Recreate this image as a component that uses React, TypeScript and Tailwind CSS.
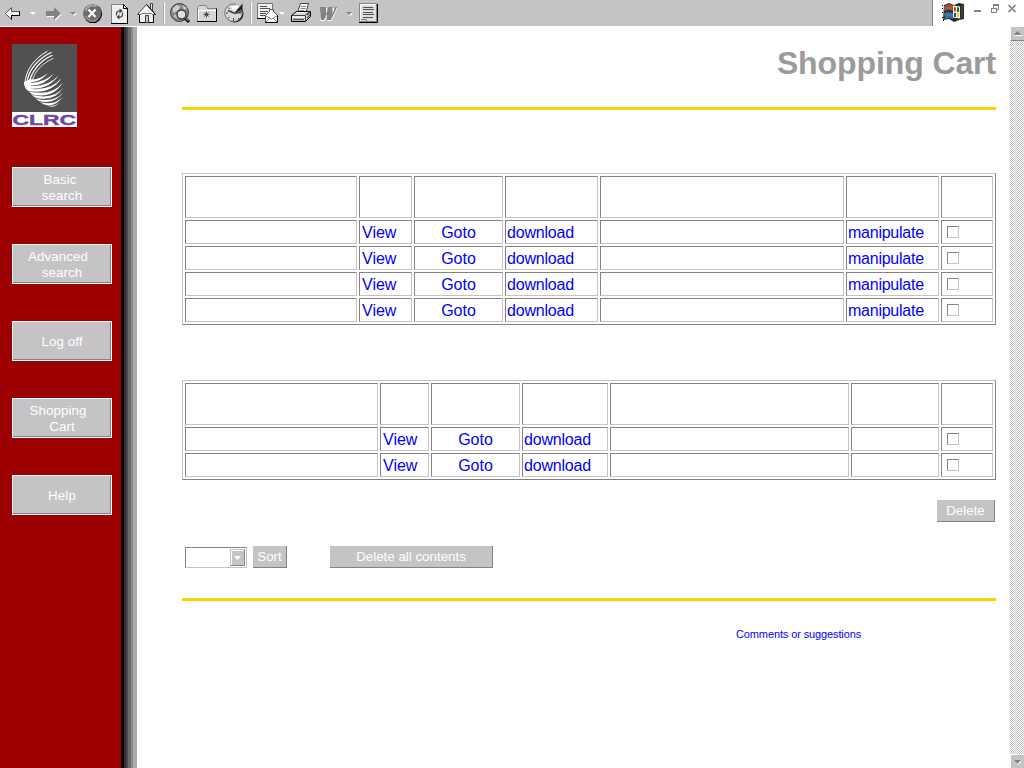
import React from "react";

type SlotProps = { x: number; w: number; children?: React.ReactNode };

/* One toolbar slot; its drawing uses toolbar coordinates. */
function Slot({ x, w, children }: SlotProps) {
  return (
    <svg width={w} height={26} viewBox={`${x} 0 ${w} 26`} className="block shrink-0" fill="none">
      {children}
    </svg>
  );
}

function Caret({ x, light }: { x: number; light?: boolean }) {
  return light ? (
    <path d={`M${x} 12h6l-3 3z`} fill="#fff" />
  ) : (
    <>
      <path d={`M${x + 1} 13h6l-3 3z`} fill="#fff" />
      <path d={`M${x} 12h6l-3 3z`} fill="#848284" />
    </>
  );
}

function Separator({ x }: { x: number }) {
  return (
    <g shapeRendering="crispEdges">
      <path d={`M${x + 0.5} 2v22`} stroke="#adaaad" />
      <path d={`M${x + 1.5} 2v22`} stroke="#fff" />
    </g>
  );
}

function Toolbar() {
  return (
    <div className="flex h-[26px] w-[933px] border-r border-[#848284] bg-[#c6c3c6]">
      <Slot x={0} w={26}>
        <path d="M11.5 7.500v4h8v4h-8v4l-6-6z" fill="#f7f7f7" stroke="#525152" />
        <path d="M11.500 19.500v-4h8v-4" stroke="#000" />
      </Slot>
      <Slot x={26} w={14}>
        <Caret x={30} light />
      </Slot>
      <Slot x={40} w={26}>
        <path d="M47 12h8V8l7 6-7 7v-4h-8z" fill="#fff" />
        <path d="M46 11h8V7l7 6.500-7 6.500V16h-8z" fill="#848284" />
      </Slot>
      <Slot x={66} w={15}>
        <Caret x={70} />
      </Slot>
      <Slot x={81} w={26}>
        <circle cx="92.800" cy="13.800" r="9.300" fill="#000" />
        <circle cx="92.200" cy="13.200" r="9" fill="#6b6d6b" />
        <path d="M85.500 11a7.500 7.500 0 0 1 11-4.500" stroke="#a5a6a5" strokeWidth="2" />
        <path d="M85.500 16a7.500 7.500 0 0 0 12 3" stroke="#8c8e8c" strokeWidth="2" />
        <path d="M88.500 9.500l7 7.500M95.500 9.500l-7 7.500" stroke="#fff" strokeWidth="2.200" />
      </Slot>
      <Slot x={107} w={26}>
        <path d="M111.500 4.500h12l4 4v15h-16z" fill="#efefef" stroke="#848284" />
        <path d="M111 23.500h17M127.500 23.500v-15h-4v-4l4 4" stroke="#000" />
        <path d="M116.500 15.500v-2q0-2.500 2.500-2.500h1" stroke="#424142" strokeWidth="1.200" />
        <path d="M119.500 8.500v5l3-2.500z" fill="#424142" />
        <path d="M122.500 12.500v2q0 2.500-2.500 2.500h-1" stroke="#424142" strokeWidth="1.200" />
        <path d="M119.500 14.500v5l-3-2.500z" fill="#424142" />
      </Slot>
      <Slot x={133} w={28}>
        <path d="M150.500 3.500h2v9h-2z" fill="#e7e7e7" stroke="#424142" />
        <path d="M139.500 13.500h14v9h-14z" fill="#efefef" stroke="#000" />
        <path d="M137.500 14.500l9-10 9 10h-3l-6-6-6 6z" fill="#fff" stroke="#424142" />
        <path d="M140 13.500l6.500-6 6 6z" fill="#efefef" />
        <path d="M145.500 15.500h3v7h-3z" fill="#c6c3c6" stroke="#424142" />
        <path d="M155.500 14.500l-9-10" stroke="#000" />
      </Slot>
      <Slot x={161} w={6}>
        <Separator x={163} />
      </Slot>
      <Slot x={167} w={26}>
        <circle cx="179.500" cy="12.500" r="9" fill="#848684" stroke="#424142" />
        <path d="M172.500 9l4-4 4 1-2 4-5 3zM182 5l5 3-3 2zM173 16l4-2 1 5z" fill="#ceced0" />
        <circle cx="181.500" cy="14.500" r="4.500" fill="#dedfde" stroke="#424142" strokeWidth="1.500" />
        <path d="M179.500 14a3 3 0 0 1 2-2" stroke="#fff" />
        <path d="M185 18l4 4" stroke="#000" strokeWidth="3" />
        <path d="M185 17.500l3.500 3.500" stroke="#d6d7d6" />
      </Slot>
      <Slot x={193} w={28}>
        <path d="M197.500 21.500v-14l1.500-2h7l1.500 3h9v13z" fill="#d6d7d6" stroke="#848284" />
        <path d="M198 10.500h18M198.500 10v11" stroke="#fff" />
        <path d="M197 21.500h19.500v-13" stroke="#000" />
        <path
          d="M206.500 11.500v6M203.500 14.500h6M204.500 12.500l4 4M208.500 12.500l-4 4"
          stroke="#424142"
          strokeWidth=".9"
        />
      </Slot>
      <Slot x={221} w={27}>
        <circle cx="234.500" cy="13.500" r="9" fill="#000" />
        <circle cx="233.500" cy="12.800" r="8.800" fill="#d6d7d6" stroke="#737573" />
        <path
          d="M233.500 5.500v2M233.500 18v3M226 13h2M239 13h2M228 7.500l1.500 1.500M228 18.500l1.500-1.500M238 18l1.500 1.500"
          stroke="#424142"
        />
        <path d="M234 12.500l-3-6 6-2 3 2z" fill="#f7f7f7" />
        <path d="M234 13.500l8.500-10v6z" fill="#212021" />
        <path d="M234 13l-6-2.500M234 13.500l8-2" stroke="#424142" strokeWidth="1.500" />
      </Slot>
      <Slot x={248} w={6}>
        <Separator x={250} />
      </Slot>
      <Slot x={254} w={33}>
        <path d="M257.500 3.500h15v15h-15z" fill="#efefef" stroke="#737573" />
        <path d="M260 6.500h7M260 8.500h10M260 11.500h8M260 13.500h6M260 15.500h5" stroke="#525152" />
        <path d="M265.500 15.500l4-4V9.500h4v2l4 4v7h-12z" fill="#fff" stroke="#525152" />
        <path d="M266 16l5.500 3 5.500-3M266 22l4-4M277 22l-4-4" stroke="#848284" />
        <path d="M257 18.500h8M265 22.500h12.500v-7" stroke="#000" />
        <Caret x={279} light />
      </Slot>
      <Slot x={287} w={28}>
        <path d="M297.500 12.500l3-9h8l-3 10z" fill="#fff" stroke="#424142" />
        <path d="M301 6.500h5M300.500 8.500h5M299.500 10.500h5" stroke="#848284" />
        <path d="M291.500 15.500l5-4h14v5l-5 5h-14z" fill="#d6d7d6" stroke="#000" />
        <path d="M292 15.500h13l5-4M305.500 16v5" stroke="#424142" />
        <path d="M292.500 17h12M297 12.500h7" stroke="#fff" />
        <path d="M293 19.500h11M307 15l3-3M307 18l3-3" stroke="#525152" strokeWidth="1.400" />
      </Slot>
      <Slot x={315} w={26}>
        <path d="M321 8h6v7l3-7h4v7l2.500-7h1l-6 13h-4v-6l-3 6h-4z" fill="#fff" />
        <path d="M320 7h6v7l2.500-7h4v7l2.500-7h2l-6 13h-4v-6l-3 6h-3z" fill="#848284" />
      </Slot>
      <Slot x={341} w={14}>
        <Caret x={346} />
      </Slot>
      <Slot x={355} w={30}>
        <path d="M359.500 3.500h17v18h-17z" fill="#dedfde" stroke="#848284" />
        <path d="M360.500 4.500h15M360.500 4.500v16" stroke="#fff" />
        <path d="M363 7.500h10M363 9.500h11M363 12.500h10M363 14.500h11M363 17.500h10" stroke="#525152" />
        <path d="M359 22.500h18.500V4" stroke="#000" />
        <path d="M361 19.500h5l1 2" stroke="#737573" />
      </Slot>
    </div>
  );
}

function WindowControls() {
  return (
    <svg width="91" height="26" viewBox="933 0 91 26" className="block" fill="none">
      <path d="M944 5l5-2 5 2 5-2 5 1v15l-5 1-5 2-5-3-6 1z" fill="#292c29" />
      <path d="M942 5h1v1h-1zM942 8h1v1h-1zM942 12h1v1h-1zM942 17h1v1h-1zM943 20h1v1h-1z" fill="#00004a" />
      <path d="M944 6l4-2 5 1v6l-4-1-5 1z" fill="#9c4d42" />
      <path d="M944 13l4-1 5 1v6l-4-1-4 1z" fill="#396da5" />
      <path d="M945 8h7M945 15h7" stroke="#8c8e8c" strokeDasharray="1 1" />
      <path d="M953 5.500l7 1v12l-7-1z" fill="#fff" />
      <path d="M954 7l2 .5v4h-2z" fill="#ff3000" />
      <path d="M957 7l2 .5v4.500h-2z" fill="#008200" />
      <path d="M954 13h2v4h-2z" fill="#0049c6" />
      <path d="M957 13h2v4h-2z" fill="#f7cb00" />
      <path d="M962 5v13" stroke="#4a6531" />
      <g shapeRendering="crispEdges">
        <path d="M974 11h7" stroke="#848284" strokeWidth="2" />
        <path d="M993.500 8V4.500h5v5H997M993 5h6M991.500 8.500h5v4h-5zM991 8h6" stroke="#848284" />
      </g>
      <path d="M1008.500 5l7 7M1015.500 5l-7 7" stroke="#848284" strokeWidth="1.700" />
    </svg>
  );
}

function Logo() {
  return (
    <svg width="65" height="83" viewBox="12 44 65 83" className="block">
      <rect x="12" y="44" width="65" height="68" fill="#525152" />
      <g fill="none" stroke="#fff" strokeLinecap="round">
        <path d="M47 51.500C35 58 25 70 25 84" strokeWidth="1" />
        <path d="M51 52.500C38 59 28 70 27 83" strokeWidth="1.200" />
        <path d="M52 55.500C41 60 31 71 29 84" strokeWidth="1.200" />
        <path d="M64 57" />
        <path d="M53 58.500C43 63 34 71 32 82" strokeWidth=".8" />
      </g>
      <g fill="#fff">
        <path d="M24 82L31 79V89L27 90Q24 87 24 82z" />
        <path d="M29 79Q38 81 48 73Q40 83 29 82z" />
        <path d="M29 82.500Q42 84 54 73.500Q44 86.500 29 85.500z" />
        <path d="M28 85.500Q47 88 58.500 75.500Q48 90.500 28 88.500z" />
        <path d="M27 88.500Q50 92 61.500 78Q51 95 28 91z" />
        <path d="M29 91.500Q52 96.500 63 82.500Q53 99 32 94.500z" />
        <path d="M32 95Q54 100 63.500 87.500Q54 102.500 35 97.500z" />
        <path d="M35.500 98.500Q54 103.500 63.500 92Q55 105 39 101z" />
        <path d="M40 102Q55 106 63 96.500Q55 108 44 104.500z" />
        <path d="M46 105Q56 107.500 61 101Q55 108.500 49 106z" />
      </g>
      <rect x="12" y="112" width="65" height="15" fill="#fff" />
      <text
        x="12.500"
        y="125.200"
        textLength="63.500"
        lengthAdjust="spacingAndGlyphs"
        fontFamily="Liberation Sans, Arial, sans-serif"
        fontWeight="bold"
        fontSize="14.500"
        fill="#6b499c"
        stroke="#6b499c"
        strokeWidth=".4"
      >
        CLRC
      </text>
    </svg>
  );
}

function NavButton({ lines, wide }: { lines: string[]; wide?: boolean }) {
  return (
    <button className="h-10 w-[100px] border border-white bg-[#c6c3c6] text-white">
      <span className="flex h-full flex-col items-center justify-center border-r border-b border-[#848284] pt-[2px] text-[13.33px] leading-4 tracking-[0.1px]">
        {lines.map((line, i) => (
          <span key={line} className={lines.length > 1 && i === 0 ? (wide ? "pr-[7px]" : "pr-[3px]") : "pl-[1px]"}>
            {line}
          </span>
        ))}
      </span>
    </button>
  );
}

function Sidebar() {
  return (
    <aside className="flex w-[137px] shrink-0">
      <nav className="flex w-[121px] flex-col items-start gap-[37px] bg-[#9c0000] pt-[17px] pl-3">
        <div className="mb-[3px]">
          <Logo />
        </div>
        <NavButton lines={["Basic", "search"]} />
        <NavButton lines={["Advanced", "search"]} wide />
        <NavButton lines={["Log off"]} />
        <NavButton lines={["Shopping", "Cart"]} wide />
        <NavButton lines={["Help"]} />
      </nav>
      <div className="w-[3px] bg-[#080808]" />
      <div className="w-[2px] bg-[#313031]" />
      <div className="w-[2px] bg-[#4a494a]" />
      <div className="w-[3px] bg-[#6b696b]" />
      <div className="w-[2px] bg-[#8c8a8c]" />
      <div className="w-[4px] bg-[#adaaad]" />
    </aside>
  );
}

const cellClass =
  "flex items-center overflow-hidden border border-t-[#848284] border-r-[#c6c3c6] border-b-[#c6c3c6] border-l-[#848284]";

const textCellClass = `${cellClass} pt-[2px]`;

type CartTableProps = { columns: string; rows: number; manipulable?: boolean };

function CartTable({ columns, rows, manipulable }: CartTableProps) {
  const heads = ["title", "view", "goto", "download", "notes", "manipulate", "select"];
  return (
    <div className="flex w-[814px] flex-col gap-[2px] border border-t-[#c6c3c6] border-r-[#848284] border-b-[#848284] border-l-[#c6c3c6] p-[2px] text-base leading-5 text-[#0000ff]">
      <div className={`grid h-[42px] gap-[2px] ${columns}`}>
        {heads.map((h) => (
          <div key={h} className={cellClass} />
        ))}
      </div>
      {Array.from({ length: rows }, (_, r) => (
        <div key={r} className={`grid h-6 gap-[2px] ${columns}`}>
          <div className={cellClass} />
          <div className={`${textCellClass} pl-[2px]`}>
            <a>View</a>
          </div>
          <div className={`${textCellClass} justify-center`}>
            <a>Goto</a>
          </div>
          <div className={`${textCellClass} pl-[1px] tracking-[-0.2px]`}>
            <a>download</a>
          </div>
          <div className={cellClass} />
          <div className={`${textCellClass} pl-[1px] tracking-[-0.25px]`}>{manipulable && <a>manipulate</a>}</div>
          <div className={`${cellClass} pl-[5px]`}>
            <span className="size-3 border border-t-[#848284] border-r-[#c6c3c6] border-b-[#c6c3c6] border-l-[#848284]" />
          </div>
        </div>
      ))}
    </div>
  );
}

const actionClass =
  "border-r border-b border-[#848284] bg-[#c6c3c6] text-center text-[13.33px] leading-[20px] text-white";

function Scrollbar() {
  return (
    <div className="flex w-[14px] shrink-0 flex-col bg-[repeating-conic-gradient(#c6c3c6_0_25%,#ffffff_0_50%)] bg-size-[2px_2px]">
      <div className="h-[14px] border-b border-l border-b-[#848284] border-l-white bg-[#c6c3c6]">
        <svg width="13" height="13" viewBox="0 0 13 13" shapeRendering="crispEdges">
          <path d="M3 8h8v1H3z" fill="#fff" />
          <path d="M6 4h1v1h1v1h1v1h1v1H3V7h1V6h1V5h1z" fill="#848284" />
        </svg>
      </div>
      <div className="mt-auto h-[14px] border-t border-l border-white bg-[#c6c3c6]">
        <svg width="13" height="13" viewBox="0 0 13 13">
          <path d="M4 6h7l-4 4z" fill="#fff" />
          <path d="M3 5h7L6.500 9z" fill="#848284" />
        </svg>
      </div>
    </div>
  );
}

export default function App() {
  return (
    <div className="flex h-[768px] w-[1024px] flex-col overflow-hidden bg-white font-['Liberation_Sans',Arial,sans-serif]">
      <header className="flex h-[27px] shrink-0">
        <Toolbar />
        <WindowControls />
      </header>
      <div className="flex min-h-0 flex-1">
        <Sidebar />
        <main className="flex flex-1 flex-col pl-[45px]">
          <h1 className="mt-[18px] h-[62px] w-[814px] text-right text-[32px] leading-9 font-bold tracking-[-0.1px] text-[#9c9a9c]">
            Shopping Cart
          </h1>
          <div className="h-[3px] w-[814px] bg-[#ffcf00]" />
          <div className="mt-[63px]">
            <CartTable columns="grid-cols-[172px_53px_89px_93px_244px_93px_52px]" rows={4} manipulable />
          </div>
          <div className="mt-[55px]">
            <CartTable columns="grid-cols-[193px_49px_89px_86px_239px_88px_52px]" rows={2} />
          </div>
          <div className="mt-5 flex w-[813px] justify-end">
            <button className={`h-[22px] w-[58px] ${actionClass}`}>Delete</button>
          </div>
          <div className="mt-6 flex pl-[3px]">
            <div className="mt-[1px] flex h-[21px] w-[62px] justify-end border border-t-[#848284] border-r-[#c6c3c6] border-b-[#c6c3c6] border-l-[#848284] p-[1px]">
              <div className="h-[17px] w-[15px] border border-t-[#c6c3c6] border-r-[#848284] border-b-[#848284] border-l-[#c6c3c6] bg-[#c6c3c6]">
                <svg width="13" height="15" viewBox="0 0 13 15" className="block">
                  <path d="M.5 15V.5H13" stroke="#fff" fill="none" />
                  <path d="M3 6h7l-3.500 4z" fill="#fff" />
                </svg>
              </div>
            </div>
            <button className={`ml-[6px] h-[22px] w-[34px] ${actionClass}`}>Sort</button>
            <button className={`ml-[43px] h-[22px] w-[163px] ${actionClass}`}>Delete all contents</button>
          </div>
          <div className="mt-[30px] h-[3px] w-[814px] bg-[#ffcf00]" />
          <a className="mt-[25px] ml-[554px] text-[11px] leading-4 tracking-[-0.12px] text-[#0000ff]">
            Comments or suggestions
          </a>
        </main>
        <Scrollbar />
      </div>
    </div>
  );
}
